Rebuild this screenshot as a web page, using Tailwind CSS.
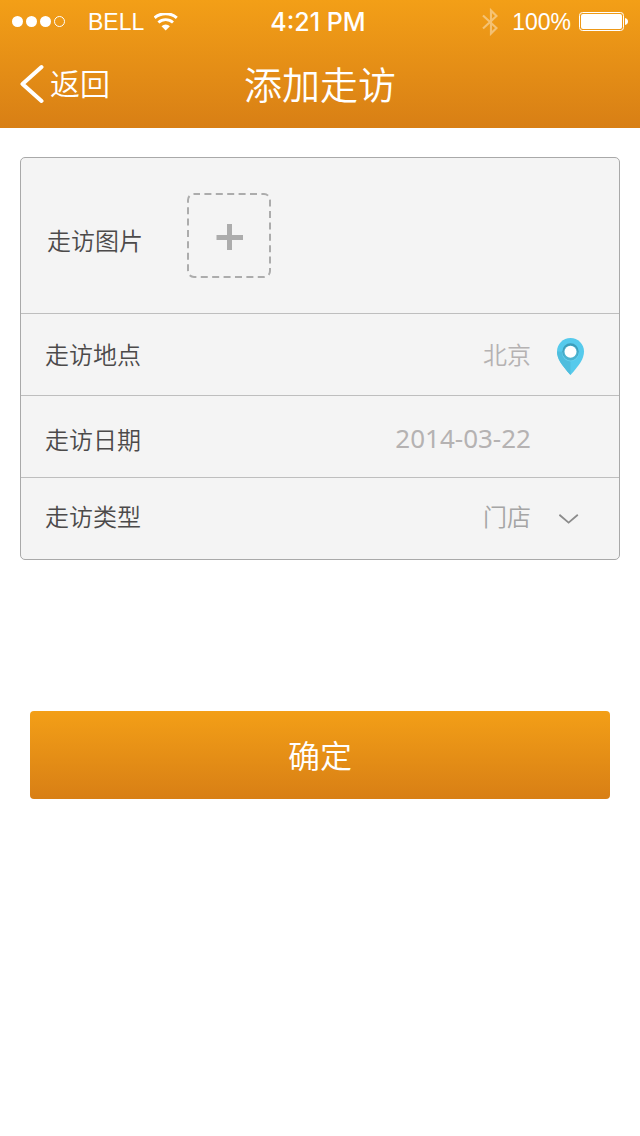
<!DOCTYPE html>
<html lang="zh-CN">
<head>
<meta charset="utf-8">
<meta name="viewport" content="width=device-width, initial-scale=1">
<title>添加走访</title>
<script src="https://cdn.jsdelivr.net/npm/@tailwindcss/browser@4"></script>
</head>
<body class="min-h-screen bg-white font-['Noto_Sans','Noto_Sans_CJK_SC',sans-serif] font-[350] text-[#4c4a4a]">
<header class="bg-linear-to-b from-[#f39f17] to-[#d87f15] text-white">
  <div class="grid h-[43px] grid-cols-[1fr_auto_1fr] items-center px-3 font-['Liberation_Sans',sans-serif] text-[23px] leading-6 font-normal">
    <div class="flex items-center">
      <svg class="h-3 w-[54px]" viewBox="0 0 54 12" fill="#fff" role="img" aria-label="信号">
        <circle cx="5.500" cy="5.500" r="5.500"/><circle cx="19.500" cy="5.500" r="5.500"/><circle cx="33.500" cy="5.500" r="5.500"/>
        <circle cx="47.500" cy="5.500" r="5" fill="none" stroke="#fff"/>
      </svg>
      <span class="ml-[22px]">BELL</span>
      <svg class="ml-2.5 h-[18px] w-6" viewBox="0 0 24 18" fill="none" stroke="#fff" role="img" aria-label="无线网络">
        <path d="M.6 4.800A17 17 0 0 1 22.800 4.800" stroke-width="3"/>
        <path d="M4.400 9.600A10.600 10.600 0 0 1 19 9.600" stroke-width="2.800"/>
        <path d="M11.700 17.500L7.500 13.200A6 6 0 0 1 15.900 13.200Z" fill="#fff" stroke="none"/>
      </svg>
    </div>
    <span class="pr-1 font-['Inter',sans-serif] text-[25px] font-medium">4:21 PM</span>
    <div class="flex items-center justify-end">
      <svg class="mr-3.5 h-7 w-4" viewBox="0 0 16 28" fill="none" stroke="#fff" stroke-opacity=".4" stroke-width="2.200" role="img" aria-label="蓝牙">
        <path d="M1 7.500L14.500 20L9 25.500V2.500L14.500 8L1 20.500"/>
      </svg>
      <span>100%</span>
      <svg class="ml-2 h-[19px] w-[49px]" viewBox="0 0 49 19" fill="#fff" role="img" aria-label="电量">
        <rect x=".5" y=".5" width="44" height="18" rx="3" fill="none" stroke="#fff"/>
        <rect x="2" y="2" width="41" height="15" rx="2"/>
        <path d="M46 6C50 6.500 50 12.500 46 13Z"/>
      </svg>
    </div>
  </div>
  <div class="grid h-[85px] grid-cols-[1fr_auto_1fr] items-center px-5 pb-[3px]">
    <a href="#" class="flex items-center gap-1.5 text-[30px] leading-9">
      <svg class="h-10 w-6" viewBox="0 0 24 40" fill="none" stroke="#fff" stroke-width="4" stroke-linecap="round" stroke-linejoin="round" aria-hidden="true"><path d="M21.500 3L2.500 20L21.500 37"/></svg>
      返回
    </a>
    <h1 class="text-[38px] leading-12 font-[350]">添加走访</h1>
  </div>
</header>

<form class="px-5 pt-[29px]">
  <div class="divide-y divide-[#bebebe] rounded-[5px] border border-[#a9a9a9] bg-[#f4f4f4] text-2xl leading-8">
    <div class="flex h-39 items-center gap-11 pl-[26px]">
      <span id="photo-label" class="pt-2.5">走访图片</span>
      <button type="button" aria-labelledby="photo-label">
        <svg class="h-[86px] w-[85px]" viewBox="0 0 85 86" fill="none" stroke="#acacac" aria-hidden="true">
          <rect x="1" y="1" width="82" height="83" rx="6" stroke-width="2" stroke-dasharray="7 4.400" stroke-dashoffset="1"/>
          <path d="M42.500 31V57M29.500 44.500H56" stroke-width="5"/>
        </svg>
      </button>
    </div>
    <div class="flex h-[82px] items-center pr-[34px] pl-6">
      <label for="place" class="shrink-0">走访地点</label>
      <input id="place" type="text" value="北京" class="min-w-0 flex-1 bg-transparent text-right text-[#b5b2b2] outline-none">
      <button type="button" aria-label="定位" class="ml-[26px]">
        <svg class="mt-1 h-[38px] w-7" viewBox="0 0 28 38" aria-hidden="true">
          <path d="M13.500 0C6 0 0 6 0 13.500C0 20.500 4.500 27 13.500 37C22.500 27 27 20.500 27 13.500C27 6 21 0 13.500 0Z" fill="#56caec"/>
          <path d="M13.500 14V37C4.500 27 0 20.500 0 13.500Z" fill="#4fbddd"/>
          <circle cx="13.500" cy="15" r="8.500" fill="#66d0ee"/>
          <circle cx="13.500" cy="13.500" r="8.200" fill="#3d9dba"/>
          <circle cx="13.500" cy="15" r="7.400" fill="#4cb3d0"/>
          <circle cx="13.500" cy="13.700" r="6" fill="#fff"/>
        </svg>
      </button>
    </div>
    <div class="flex h-[82px] items-center pr-[88px] pl-6">
      <label for="date" class="shrink-0 pt-1.5">走访日期</label>
      <input id="date" type="text" value="2014-03-22" class="min-w-0 flex-1 bg-transparent pt-0.5 text-right text-[26px] font-normal text-[#b5b2b2] outline-none">
    </div>
    <div class="relative flex h-[81px] items-center pr-[88px] pb-1 pl-6">
      <label for="kind" class="shrink-0">走访类型</label>
      <select id="kind" class="min-w-0 flex-1 appearance-none bg-transparent text-right text-[#a5a5a5] outline-none [text-align-last:right]">
        <option>门店</option>
      </select>
      <svg class="pointer-events-none absolute top-9 right-10 h-2.5 w-5" viewBox="0 0 20 10" fill="none" stroke="#8c8c8c" stroke-width="1.800" aria-hidden="true"><path d="M.4 .8L9.600 8.600L18.800 .8"/></svg>
    </div>
  </div>
  <div class="px-2.5 pt-[151px]">
    <button type="submit" class="h-22 w-full rounded bg-linear-to-b from-[#f39f17] to-[#d87f15] pt-0.5 text-[32px] text-white">确定</button>
  </div>
</form>
</body>
</html>
